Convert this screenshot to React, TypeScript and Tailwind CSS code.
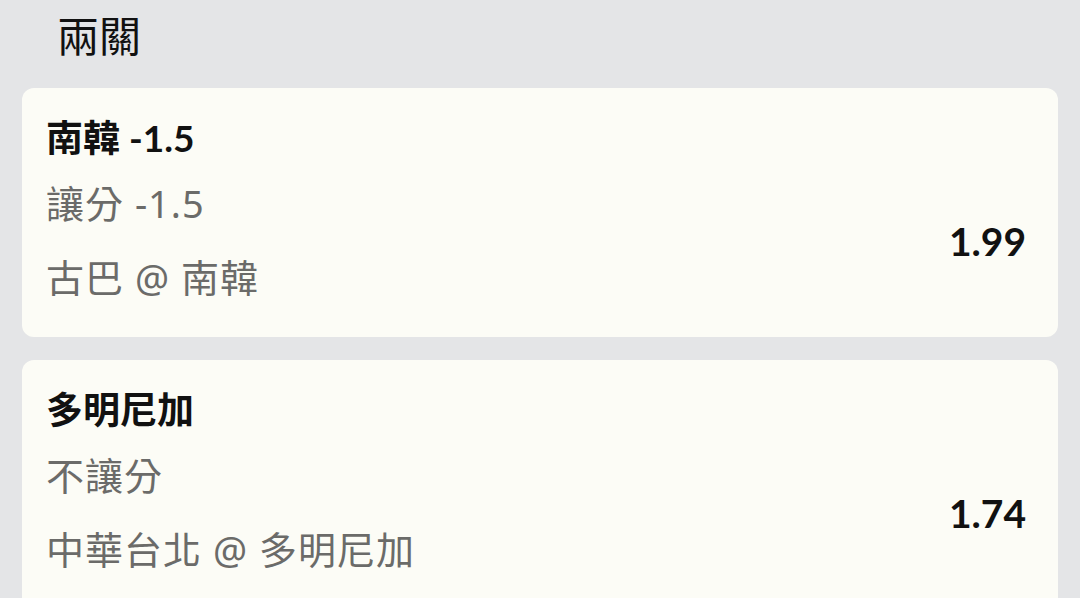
import React from "react";

type Bet = { title: string; sub: string; match: string; odds: string };

const bets: Bet[] = [
  { title: "南韓 -1.5", sub: "讓分 -1.5", match: "古巴 @ 南韓", odds: "1.99" },
  { title: "多明尼加", sub: "不讓分", match: "中華台北 @ 多明尼加", odds: "1.74" },
];

function Card({ b }: { b: Bet }) {
  return (
    <div className="mx-[22px] mb-[23px] flex justify-between rounded-[12px] bg-[#fcfcf6] pl-[24px] pr-[32px] pt-[28px] pb-[38px]">
      <div className="flex flex-col">
        <div className="h-[44px] whitespace-nowrap font-['Lato','Noto_Sans_CJK_TC',sans-serif] text-[37px] font-bold leading-[44px] text-[#111]">
          {b.title}
        </div>
        <div className="mt-[21px] h-[44px] whitespace-nowrap font-['Noto_Sans','Noto_Sans_CJK_TC',sans-serif] text-[38px] leading-[44px] tracking-[1px] text-[#6b6b69]">
          {b.sub}
        </div>
        <div className="mt-[30px] h-[44px] whitespace-nowrap font-['Noto_Sans','Noto_Sans_CJK_TC',sans-serif] text-[38px] leading-[44px] tracking-[1px] text-[#6b6b69]">
          {b.match}
        </div>
      </div>
      <div className="mt-[103px] h-[44px] font-['Lato','Noto_Sans_CJK_TC',sans-serif] text-[39px] font-bold leading-[44px] text-[#111]">
        {b.odds}
      </div>
    </div>
  );
}

export default function App() {
  return (
    <div className="h-[598px] w-[1080px] overflow-hidden bg-[#e4e5e7]">
      <div className="mt-[10px] h-[48px] pl-[57px] font-['Noto_Sans_CJK_TC',sans-serif] text-[42px] leading-[48px] text-[#111]">
        兩關
      </div>
      <div className="mt-[30px]">
        {bets.map((b, i) => (
          <Card key={i} b={b} />
        ))}
      </div>
    </div>
  );
}
